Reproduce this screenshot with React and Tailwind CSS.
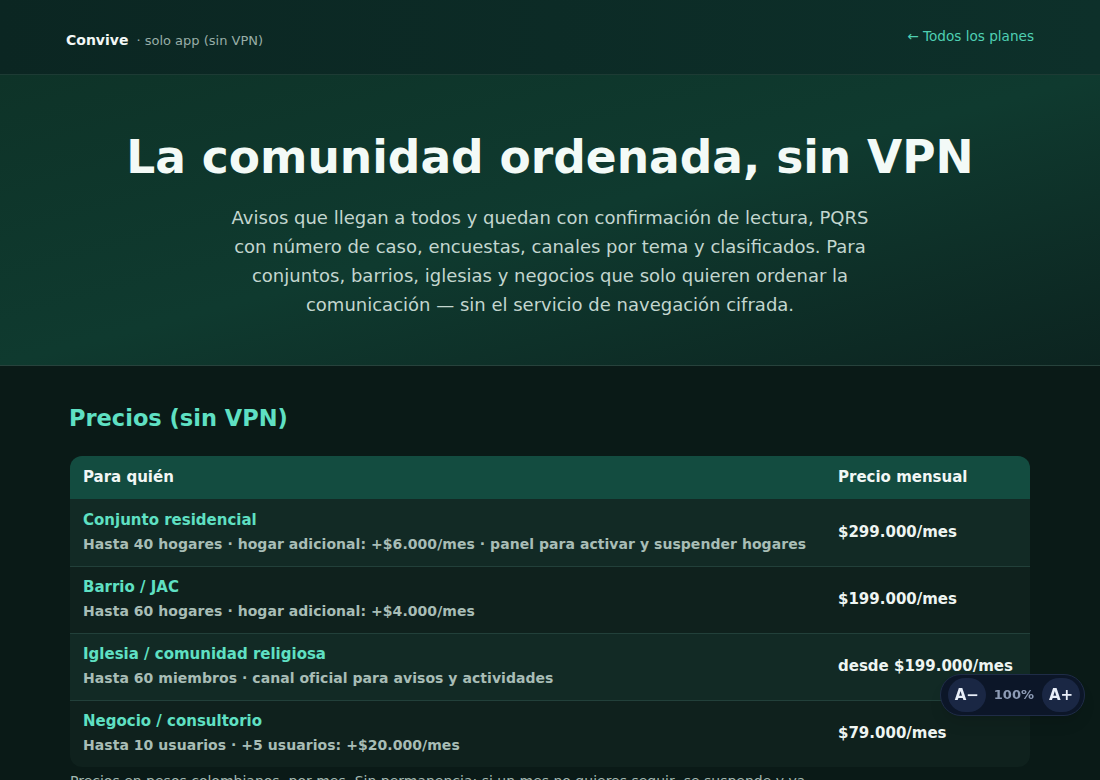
import React from 'react';

const planes = [
  {
    nombre: 'Conjunto residencial',
    detalle: 'Hasta 40 hogares · hogar adicional: +$6.000/mes · panel para activar y suspender hogares',
    precio: '$299.000/mes',
  },
  {
    nombre: 'Barrio / JAC',
    detalle: 'Hasta 60 hogares · hogar adicional: +$4.000/mes',
    precio: '$199.000/mes',
  },
  {
    nombre: 'Iglesia / comunidad religiosa',
    detalle: 'Hasta 60 miembros · canal oficial para avisos y actividades',
    precio: 'desde $199.000/mes',
  },
  {
    nombre: 'Negocio / consultorio',
    detalle: 'Hasta 10 usuarios · +5 usuarios: +$20.000/mes',
    precio: '$79.000/mes',
  },
];

const FontSizer = () => (
  <div className="fixed right-[15px] top-[674px] flex items-center gap-[6px] h-[42px] pl-[7px] pr-[4px] rounded-full bg-[#0c1628] border border-[#1f2c47] shadow-lg">
    <button className="h-[34px] w-[38px] rounded-full bg-[#1a2744] text-[#e8eef8] text-[15px] font-bold">A−</button>
    <span className="text-[13px] font-bold text-[#8d9bb5] px-[2px]">100%</span>
    <button className="h-[34px] w-[38px] rounded-full bg-[#1a2744] text-[#e8eef8] text-[15px] font-bold">A+</button>
  </div>
);

export default function App() {
  return (
    <div className="min-h-screen bg-[#0a1a17] text-[#e6f0ec] font-['DejaVu_Sans',sans-serif]">
      <header className="h-[75px] border-b border-[#1d3b34] bg-gradient-to-r from-[#0b2622] to-[#0d302a]">
        <div className="w-[968px] ml-[66px] h-full flex items-center justify-between">
          <div className="flex items-baseline gap-[8px] pt-[6px]">
            <span className="text-[14px] font-bold text-[#f2f7f5]">Convive</span>
            <span className="text-[13px] text-[#98aea7]">· solo app (sin VPN)</span>
          </div>
          <a href="#" className="text-[13.6px] text-[#4fd0b3] -mt-[2px]">← Todos los planes</a>
        </div>
      </header>

      <section className="h-[291px] border-b border-[#27423c] bg-gradient-to-br from-[#0e3328] via-[#0f3a2f] to-[#0c2420]">
        <div className="w-[1000px] ml-[50px] text-center pt-[55px]">
          <h1 className="text-[45.5px] leading-[56px] font-bold text-[#f3faf7]">La comunidad ordenada, sin VPN</h1>
          <p className="mt-[17px] mx-auto w-[650px] text-[18px] leading-[29px] text-[#c3d6cf]">
            Avisos que llegan a todos y quedan con confirmación de lectura, PQRS con número de caso, encuestas, canales por tema y clasificados. Para conjuntos, barrios, iglesias y negocios que solo quieren ordenar la comunicación — sin el servicio de navegación cifrada.
          </p>
        </div>
      </section>

      <main className="w-[960px] ml-[70px] pt-[36px] pb-[40px]">
        <h2 className="-ml-[1px] text-[22.5px] leading-[32px] font-bold text-[#5fe0c3]">Precios (sin VPN)</h2>
        <div className="mt-[22px] rounded-[12px] overflow-hidden">
          <div className="flex h-[43px] items-center bg-[#134c40] text-[15px] font-bold text-[#f2f7f5]">
            <div className="flex-1 pl-[13px] -mt-[1px]">Para quién</div>
            <div className="w-[192px] -mt-[1px]">Precio mensual</div>
          </div>
          {planes.map((p, i) => (
            <div
              key={p.nombre}
              className={`flex items-center h-[67px] ${i > 0 ? 'border-t border-[#22403a]' : ''} ${i % 2 === 0 ? 'bg-[#122a25]' : 'bg-[#0f211d]'}`}
            >
              <div className="flex-1 pl-[13px] -mt-[2px]">
                <div className="text-[15px] leading-[20px] font-bold text-[#5fe0c3]">{p.nombre}</div>
                <div className="mt-[4px] text-[14px] tracking-[0.05px] leading-[20px] font-bold text-[#a8bdb6]">{p.detalle}</div>
              </div>
              <div className="w-[192px] text-[15px] font-bold text-[#eef5f2] -mt-[1px]">{p.precio}</div>
            </div>
          ))}
        </div>
        <p className="mt-[3px] max-w-[780px] text-[14px] leading-[22px] text-[#a3b8b1]">
          Precios en pesos colombianos, por mes. Sin permanencia: si un mes no quieres seguir, se suspende y va quedando todo guardado por si decides volver. Los planes se pueden ajustar al tamaño real de tu comunidad.
        </p>
      </main>

      <FontSizer />
    </div>
  );
}
